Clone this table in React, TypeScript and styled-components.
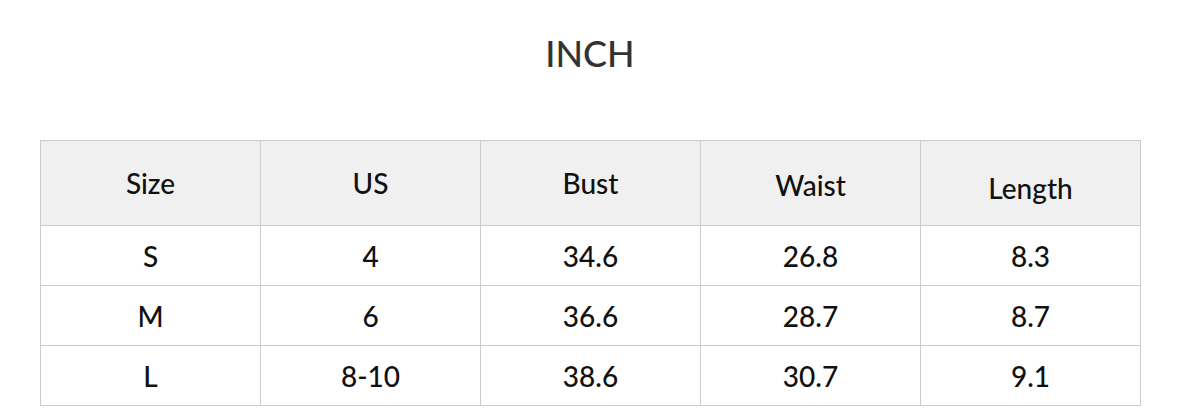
import React from "react";
import styled, { createGlobalStyle } from "styled-components";

const Global = createGlobalStyle`
  html, body { margin: 0; padding: 0; background: #ffffff; }
  body { font-family: Lato, "Open Sans", sans-serif; color: #111; }
`;

const Page = styled.div`
  width: 1180px;
  padding: 0 40px;
  box-sizing: border-box;
`;

const Title = styled.h2`
  margin: 0;
  height: 140px;
  padding-top: 31px;
  box-sizing: border-box;
  text-align: center;
  font-size: 36px;
  line-height: 44px;
  font-weight: 500;
  color: #333;
`;

const Table = styled.table`
  width: 1101px;
  border-collapse: collapse;
  table-layout: fixed;
`;

const HeadCell = styled.th<{ $shift?: number }>`
  height: 84px;
  padding: 0;
  background: #f0f0f0;
  border: 1px solid #cccccc;
  font-size: 28px;
  font-weight: 500;
  color: #111;
  text-align: center;
  vertical-align: middle;
  & > span {
    position: relative;
    top: ${(p) => p.$shift ?? 0}px;
  }
`;

const Cell = styled.td`
  height: 59px;
  padding: 0;
  border: 1px solid #cccccc;
  font-size: 28px;
  font-weight: 500;
  color: #111;
  text-align: center;
  vertical-align: middle;
`;

const headers: [string, number][] = [
  ["Size", 0],
  ["US", 0],
  ["Bust", 0],
  ["Waist", 2],
  ["Length", 5],
];

const rows = [
  ["S", "4", "34.6", "26.8", "8.3"],
  ["M", "6", "36.6", "28.7", "8.7"],
  ["L", "8-10", "38.6", "30.7", "9.1"],
];

export default function App() {
  return (
    <Page>
      <Global />
      <Title>INCH</Title>
      <Table>
        <thead>
          <tr>
            {headers.map(([h, s]) => (
              <HeadCell key={h} $shift={s}>
                <span>{h}</span>
              </HeadCell>
            ))}
          </tr>
        </thead>
        <tbody>
          {rows.map((r) => (
            <tr key={r[0]}>
              {r.map((c, i) => (
                <Cell key={i}>{c}</Cell>
              ))}
            </tr>
          ))}
        </tbody>
      </Table>
    </Page>
  );
}
